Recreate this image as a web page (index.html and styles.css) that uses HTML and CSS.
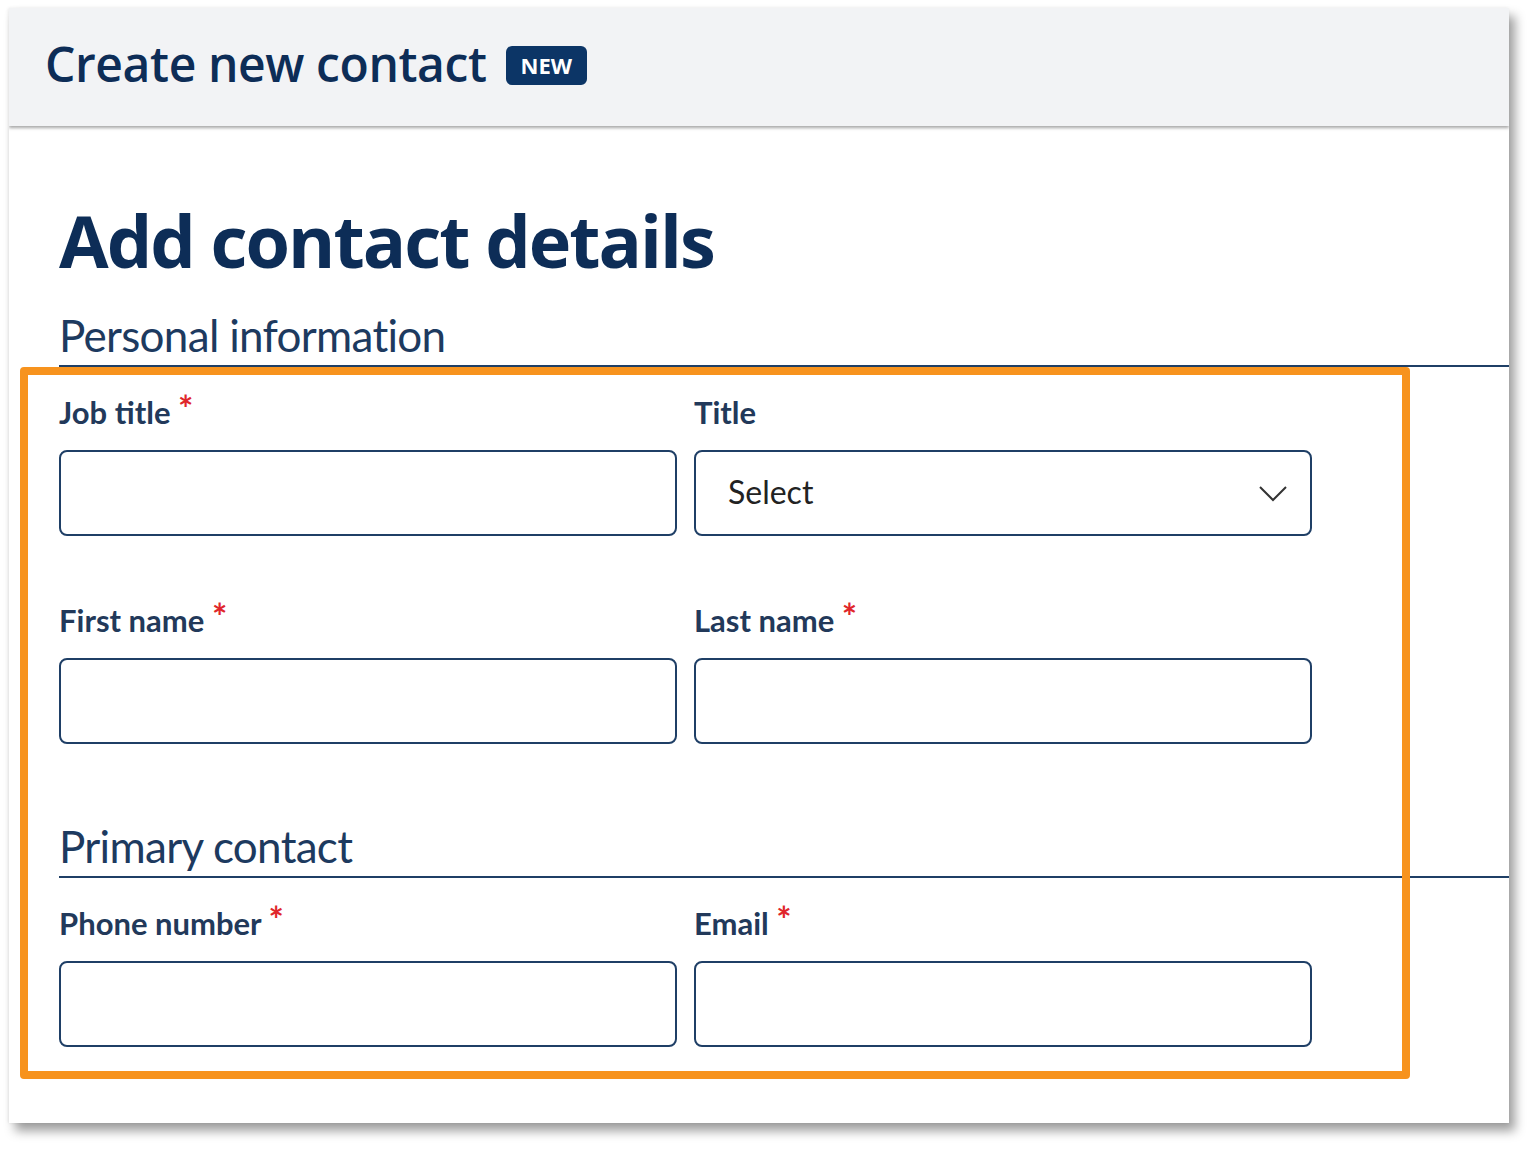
FILE: index.html
```html
<!DOCTYPE html>
<html lang="en">
<head>
<meta charset="utf-8">
<title>Create new contact</title>
<link rel="stylesheet" href="styles.css">
</head>
<body>
<div class="card">
  <header class="topbar">
    <h2 class="topbar-title">Create new contact</h2>
    <span class="badge">NEW</span>
  </header>
  <main class="content">
    <h1 class="page-title">Add contact details</h1>

    <section class="section">
      <h3 class="section-title">Personal information</h3>
      <div class="grid">
        <div class="field">
          <label class="label">Job title <span class="req">*</span></label>
          <div class="input"></div>
        </div>
        <div class="field">
          <label class="label">Title</label>
          <div class="input select">
            <span class="select-text">Select</span>
            <svg class="chevron" width="30" height="18" viewBox="0 0 30 18"><path d="M2 3 L15 16 L28 3" fill="none" stroke="#333" stroke-width="2"/></svg>
          </div>
        </div>
        <div class="field">
          <label class="label">First name <span class="req">*</span></label>
          <div class="input"></div>
        </div>
        <div class="field">
          <label class="label">Last name <span class="req">*</span></label>
          <div class="input"></div>
        </div>
      </div>
    </section>

    <section class="section section-2">
      <h3 class="section-title">Primary contact</h3>
      <div class="grid">
        <div class="field">
          <label class="label">Phone number <span class="req">*</span></label>
          <div class="input"></div>
        </div>
        <div class="field">
          <label class="label">Email <span class="req">*</span></label>
          <div class="input"></div>
        </div>
      </div>
    </section>
  </main>
</div>
<div class="highlight"></div>
</body>
</html>
```
FILE: styles.css
```css
html, body {
  margin: 0;
  padding: 0;
  background: #ffffff;
}
body {
  width: 1538px;
  height: 1152px;
  position: relative;
  overflow: hidden;
  font-family: Lato, "Open Sans", sans-serif;
  color: #1d3a5f;
}
.card {
  margin: 8px 0 0 9px;
  width: 1500px;
  height: 1115px;
  background: #fff;
  box-shadow: 6px 8px 10px rgba(0,0,0,0.38), -1px 0 3px rgba(0,0,0,0.08);
  overflow: hidden;
}
.topbar {
  height: 118px;
  background: #f2f3f5;
  display: flex;
  align-items: center;
  padding-left: 36px;
  box-shadow: 0 2px 3px rgba(0,0,0,0.35);
  position: relative;
  gap: 19px;
}
.topbar-title {
  margin: 0;
  font-family: "Open Sans", sans-serif;
  font-weight: 600;
  font-size: 48px;
  letter-spacing: -0.4px;
  color: #0d2d57;
  line-height: 1;
  padding-bottom: 6px;
}
.badge {
  background: #0c3566;
  color: #fff;
  font-family: "Open Sans", sans-serif;
  font-weight: 700;
  font-size: 22px;
  padding: 0 15px;
  height: 39px;
  line-height: 39px;
  border-radius: 6px;
  margin-top: -4px;
}
.content {
  padding-left: 50px;
}
.page-title {
  margin: 69px 0 0 0;
  font-family: "Open Sans", sans-serif;
  font-weight: 700;
  font-size: 72px;
  letter-spacing: -2px;
  line-height: 90px;
  color: #0d2d57;
}
.section-title {
  margin: 0;
  font-family: Lato, sans-serif;
  font-weight: 400;
  font-size: 44px;
  line-height: 56px;
  color: #1d3a5f;
  letter-spacing: -0.7px;
  border-bottom: 2px solid #1f3f66;
  padding-bottom: 2px;
}
.section {
  margin-top: 22px;
}
.section-2 {
  margin-top: 74px;
}
.grid {
  display: grid;
  grid-template-columns: 618px 618px;
  column-gap: 17px;
  row-gap: 66px;
  margin-top: 27px;
}
.field {
  display: flex;
  flex-direction: column;
}
.label {
  font-family: Lato, sans-serif;
  font-weight: 700;
  font-size: 31px;
  line-height: 36px;
  height: 36px;
  color: #22395a;
  margin-bottom: 20px;
  white-space: nowrap;
}
.req {
  color: #e0262b;
  font-size: 36px;
  line-height: 0;
  vertical-align: 2px;
  margin-left: 0;
}
.input {
  box-sizing: border-box;
  height: 86px;
  border: 2px solid #1f3f66;
  border-radius: 8px;
  background: #fff;
}
.select {
  display: flex;
  align-items: center;
  justify-content: space-between;
  padding: 0 22px 0 32px;
}
.select-text {
  font-family: Lato, sans-serif;
  font-size: 32px;
  color: #222;
  margin-top: -3px;
}
.chevron {
  display: block;
}
.highlight {
  position: absolute;
  left: 20px;
  top: 367px;
  width: 1390px;
  height: 712px;
  box-sizing: border-box;
  border: 8px solid #f7931e;
  border-radius: 4px;
  pointer-events: none;
}
```
